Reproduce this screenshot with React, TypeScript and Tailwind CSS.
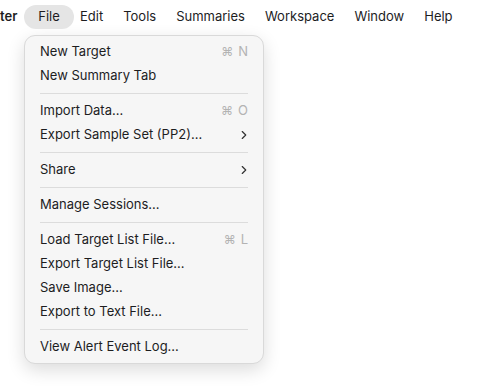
import { ChevronRight } from "lucide-react"

type Item = { label: string; shortcut?: string; submenu?: boolean } | "sep"

const menuBar = ["Edit", "Tools", "Summaries", "Workspace", "Window", "Help"]

const items: Item[] = [
  { label: "New Target", shortcut: "N" },
  { label: "New Summary Tab" },
  "sep",
  { label: "Import Data...", shortcut: "O" },
  { label: "Export Sample Set (PP2)...", submenu: true },
  "sep",
  { label: "Share", submenu: true },
  "sep",
  { label: "Manage Sessions..." },
  "sep",
  { label: "Load Target List File...", shortcut: "L" },
  { label: "Export Target List File..." },
  { label: "Save Image..." },
  { label: "Export to Text File..." },
  "sep",
  { label: "View Alert Event Log..." },
]

export default function App() {
  return (
    <div className="w-[480px] h-[390px] bg-white text-[13px] text-[#1d1d1f] overflow-hidden" style={{ fontFamily: "Inter, 'Noto Sans', sans-serif" }}>
      {/* Menu bar */}
      <div className="flex items-center h-8 pt-0.5">
        <span className="w-6 shrink-0 font-semibold whitespace-nowrap">ter</span>
        <span className="h-6 w-[50px] rounded-full bg-[#e5e5e5] flex items-center justify-center">File</span>
        <div className="flex items-center gap-[20px] ml-[6px]">
          {menuBar.map((m) => (
            <span key={m}>{m}</span>
          ))}
        </div>
      </div>

      {/* Dropdown */}
      <div className="ml-6 mt-[3px] w-[240px] rounded-[11px] bg-[#f6f6f6] border border-[#d9d9d9] shadow-[0_6px_18px_rgba(0,0,0,0.14)] px-[15px] py-1">
        {items.map((it, i) =>
          it === "sep" ? (
            <div key={i} className="h-px bg-[#dcdcdc] my-[5px]" />
          ) : (
            <div key={i} className="h-6 flex items-center justify-between">
              <span>{it.label}</span>
              {it.shortcut && (
                <span className="text-[#b3b3b3] flex items-center gap-[5px]">
                  <span className="text-[12px]">⌘</span>
                  {it.shortcut}
                </span>
              )}
              {it.submenu && <ChevronRight className="w-3.5 h-3.5 -mr-[3px] text-[#333]" strokeWidth={2} />}
            </div>
          )
        )}
      </div>
    </div>
  )
}
